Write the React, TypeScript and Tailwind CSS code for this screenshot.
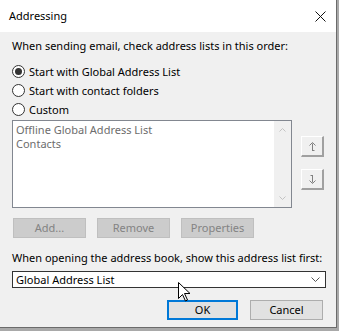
import React from "react";

const font = { fontFamily: '"Noto Sans", "Open Sans", sans-serif' };

const Radio: React.FC<{ label: string; checked?: boolean }> = ({ label, checked }) => (
  <div className="flex items-center h-[19px] gap-[4px]">
    <div className="w-[13px] h-[13px] rounded-full border border-[#333333] bg-white flex items-center justify-center">
      {checked && <div className="w-[7px] h-[7px] rounded-full bg-[#333333]" />}
    </div>
    <span className="text-[11px] leading-[16px] text-black whitespace-nowrap">{label}</span>
  </div>
);

const MoveButton: React.FC<{ down?: boolean }> = ({ down }) => (
  <div className="w-[23px] h-[21px] bg-[#f0f0f0] border-t border-l border-t-white border-l-white border-r-2 border-b-2 border-r-[#a0a0a0] border-b-[#a0a0a0] flex items-center justify-center">
    <svg width="7" height="9" viewBox="0 0 7 9" fill="none" stroke="#808080" strokeWidth="1">
      {down ? (
        <>
          <path d="M3.5 0v7.5M0.5 5.5l3 3 3-3" />
          <path d="M1.5 0.5h2" />
        </>
      ) : (
        <>
          <path d="M3.5 9V1.5M0.5 3.5l3-3 3 3" />
          <path d="M3.5 8.5h2" />
        </>
      )}
    </svg>
  </div>
);

const GrayButton: React.FC<{ label: string }> = ({ label }) => (
  <div className="w-[73px] h-[20px] bg-[#cccccc] border border-[#bfbfbf] flex items-center justify-center text-[11px] text-[#838383]">
    {label}
  </div>
);

export default function App() {
  return (
    <div className="w-[339px] h-[331px] bg-[#a9a9a9] relative overflow-hidden" style={font}>
      <div className="w-[337px] h-[328px] flex flex-col border-r border-b border-[#6b6b6b] bg-[#f0f0f0]">
        <div className="h-[32px] bg-white flex items-center justify-between pl-[9px] pr-[10px] shrink-0">
          <span className="text-[11px] text-black">Addressing</span>
          <svg width="11" height="11" viewBox="0 0 11 11" stroke="#111" strokeWidth="1">
            <path d="M0.5 0.5l10 10M10.5 0.5l-10 10" />
          </svg>
        </div>
        <div className="flex-1 flex flex-col px-[12px] pt-[6px]">
          <div className="h-[16px] text-[11px] leading-[16px] text-black whitespace-nowrap">
            When sending email, check address lists in this order:
          </div>
          <div className="mt-[8px] flex flex-col">
            <Radio label="Start with Global Address List" checked />
            <Radio label="Start with contact folders" />
            <Radio label="Custom" />
          </div>
          <div className="mt-[1px] flex gap-[9px]">
            <div className="w-[281px] h-[88px] border border-[#828790] bg-white flex">
              <div className="flex-1 pl-[3px] pt-[2px] text-[11px] leading-[14px] text-[#6d6d6d]">
                <div className="h-[14px]">Offline Global Address List</div>
                <div className="h-[14px]">Contacts</div>
              </div>
              <div className="w-[17px] bg-[#f0f0f0] flex flex-col justify-between items-center py-[7px]">
                <svg width="7" height="4" viewBox="0 0 7 4" fill="none" stroke="#c3c3c3">
                  <path d="M0.5 3.5l3-3 3 3" />
                </svg>
                <svg width="7" height="4" viewBox="0 0 7 4" fill="none" stroke="#c3c3c3">
                  <path d="M0.5 0.5l3 3 3-3" />
                </svg>
              </div>
            </div>
            <div className="flex flex-col pt-[16px] gap-[12px]">
              <MoveButton />
              <MoveButton down />
            </div>
          </div>
          <div className="mt-[10px] flex gap-[11px] pl-[1px]">
            <GrayButton label="Add..." />
            <GrayButton label="Remove" />
            <GrayButton label="Properties" />
          </div>
          <div className="mt-[12px] h-[16px] text-[11px] leading-[16px] text-black whitespace-nowrap">
            When opening the address book, show this address list first:
          </div>
          <div className="mt-[5px] w-[314px] h-[17px] bg-white border border-[#333333] flex items-center justify-between pl-[3px] pr-[5px]">
            <span className="text-[11px] leading-[15px] text-black">Global Address List</span>
            <svg width="9" height="5" viewBox="0 0 9 5" fill="none" stroke="#555">
              <path d="M0.5 0.5l4 4 4-4" />
            </svg>
          </div>
          <div className="mt-[12px] flex justify-end gap-[12px] pr-[1px]">
            <div className="w-[71px] h-[20px] bg-[#e1e1e1] border-2 border-[#0078d7] flex items-center justify-center text-[11px] text-black">
              OK
            </div>
            <div className="w-[73px] h-[20px] bg-[#e1e1e1] border border-[#adadad] flex items-center justify-center text-[11px] text-black">
              Cancel
            </div>
          </div>
        </div>
      </div>
      <svg className="absolute left-[178px] top-[282px]" width="13" height="20" viewBox="0 0 13 20">
        <path d="M0.5 0.5v16l4-4 3 6.5 2-1-3-6.5h5.5z" fill="white" stroke="black" strokeWidth="1" />
      </svg>
    </div>
  );
}
